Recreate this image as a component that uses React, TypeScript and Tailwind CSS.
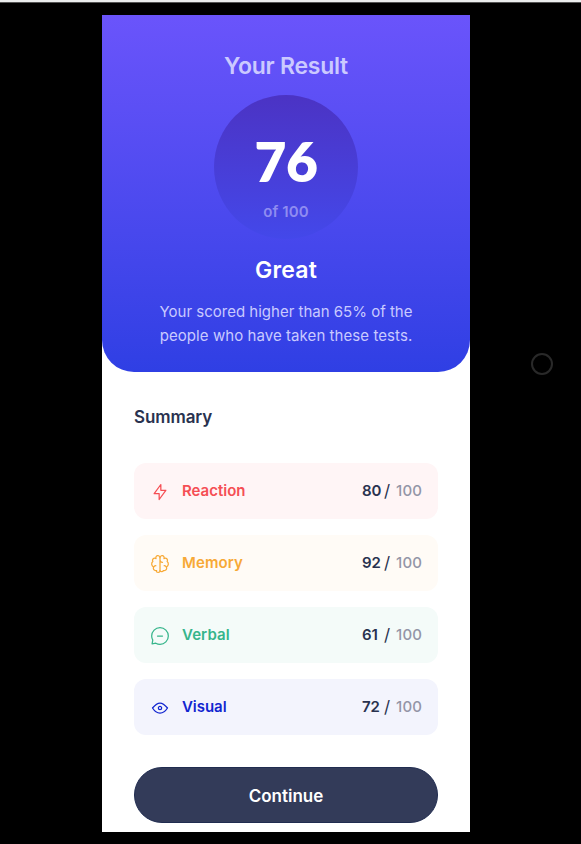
import type { ReactNode } from "react";

function Icon({ children }: { children: ReactNode }) {
  return (
    <svg
      className="mt-[2px] h-5 w-5 shrink-0"
      viewBox="0 0 20 20"
      fill="none"
      stroke="currentColor"
      strokeWidth="1.25"
      strokeLinecap="round"
      strokeLinejoin="round"
    >
      {children}
    </svg>
  );
}

const rows = [
  {
    name: "Reaction",
    score: 80,
    bg: "bg-[#fff5f6]",
    text: "text-[#f54e54]",
    tracking: "tracking-[0px]",
    icon: <path d="M10.833 8.333V2.5l-6.666 9.167h5V17.5l6.666-9.167h-5Z" />,
  },
  {
    name: "Memory",
    score: 92,
    bg: "bg-[#fffbf6]",
    text: "text-[#f7a936]",
    tracking: "tracking-[0.1px]",
    icon: (
      <>
        <path d="M5.833 11.667a2.5 2.5 0 1 0 .834 4.858" />
        <path d="M3.553 13.004a3.333 3.333 0 0 1-.728-5.53m.025-.067a2.083 2.083 0 0 1 2.983-2.824m.199.054A2.083 2.083 0 1 1 10 3.75v12.917a1.833 1.833 0 0 1-3.667 0M10 5.833a2.5 2.5 0 0 0 2.5 2.5m1.667 3.334a2.5 2.5 0 1 1-.834 4.858" />
        <path d="M16.447 13.004a3.334 3.334 0 0 0 .728-5.53m-.025-.067a2.083 2.083 0 0 0-2.983-2.824M10 3.75a2.085 2.085 0 0 1 2.538-2.033 2.084 2.084 0 0 1 1.43 2.92m-.635 12.03A1.833 1.833 0 0 1 10 16.667" />
      </>
    ),
  },
  {
    name: "Verbal",
    score: 61,
    bg: "bg-[#f4fbf9]",
    text: "text-[#36b58b]",
    tracking: "tracking-[0.1px]",
    icon: (
      <path d="M7.5 10h5M10 18.333A8.333 8.333 0 1 0 1.667 10c0 1.518.406 2.942 1.115 4.167l-.699 3.75 3.75-.699A8.295 8.295 0 0 0 10 18.333Z" />
    ),
  },
  {
    name: "Visual",
    score: 72,
    bg: "bg-[#f3f4fd]",
    text: "text-[#1125d0]",
    tracking: "tracking-[-0.05px]",
    icon: (
      <>
        <path d="M10 11.667a1.667 1.667 0 1 0 0-3.334 1.667 1.667 0 0 0 0 3.334Z" />
        <path d="M17.5 10c-1.574 2.492-4.402 5-7.5 5s-5.926-2.508-7.5-5C4.416 7.632 6.66 5 10 5s5.584 2.632 7.5 5Z" />
      </>
    ),
  },
];

export default function App() {
  return (
    <div className="relative h-[844px] w-[581px] overflow-hidden bg-black pl-[102px] font-['Inter',sans-serif]">
      <div className="-ml-[102px] h-[3px] border-b border-[#555] bg-[#eceeee]" />
      <main className="mt-3 h-[817px] w-[368px] bg-white">
        <header className="flex h-[357px] flex-col items-center rounded-b-[32px] bg-linear-to-b from-[#6a54fb] to-[#2f3fe4] pt-[35px] text-white">
          <h1 className="text-[23px] leading-8 font-semibold tracking-[-0.25px] text-[#cbc9ff]">Your Result</h1>
          <div className="mt-[13px] flex h-36 w-36 flex-col items-center rounded-full bg-linear-to-b from-[#4b33c4] to-[#4348ea] pt-[38px]">
            <span className="font-['Lato',sans-serif] text-[55px] leading-[56px] font-extrabold tracking-[-0.5px]">76</span>
            <span className="mt-[11px] text-[15px] leading-6 font-semibold tracking-[0.1px] text-[#8f8cf1]">of 100</span>
          </div>
          <h2 className="mt-[15px] text-[23px] leading-8 font-semibold tracking-[0.2px]">Great</h2>
          <p className="mt-[14px] text-center text-[15px] leading-6 text-[#c9caff]">
            Your scored higher than 65% of the
            <br />
            <span className="tracking-[0.07px]">people who have taken these tests.</span>
          </p>
        </header>
        <section className="px-8 pt-[31px]">
          <h2 className="text-[17px] leading-7 font-semibold tracking-[-0.1px] text-[#29324f]">Summary</h2>
          <ul className="mt-8 flex flex-col gap-4">
            {rows.map((r) => (
              <li key={r.name} className={`flex h-14 items-center rounded-xl px-4 ${r.bg}`}>
                <span className={`flex items-center gap-3 ${r.text}`}>
                  <Icon>{r.icon}</Icon>
                  <span className={`text-[15px] leading-6 font-semibold ${r.tracking}`}>{r.name}</span>
                </span>
                <span className="ml-auto flex text-[15px] leading-6 text-[#29324f]">
                  <span className="w-[22px] font-semibold tracking-[-0.3px]">{r.score}</span>
                  <span className="w-[12px] text-[17px]">/</span>
                  <span className="font-medium tracking-[0.1px] text-[#9395a7]">100</span>
                </span>
              </li>
            ))}
          </ul>
          <button className="mt-8 h-14 w-full rounded-full border border-[#202c50] bg-[#333b59] pt-1 text-[17px] font-semibold text-white">
            Continue
          </button>
        </section>
      </main>
      <div className="absolute top-[353px] left-[531px] h-[22px] w-[22px] rounded-full border-2 border-[#292929]" />
    </div>
  );
}
